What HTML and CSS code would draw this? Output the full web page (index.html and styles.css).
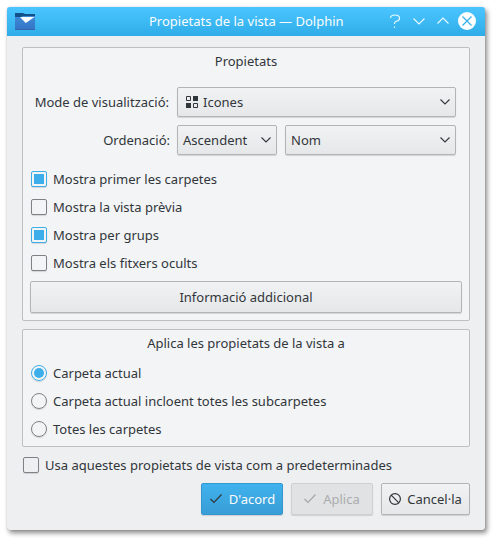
FILE: index.html
```html
<!DOCTYPE html>
<html lang="ca">
<head>
<meta charset="utf-8">
<title>Propietats de la vista — Dolphin</title>
<link rel="stylesheet" href="styles.css">
</head>
<body>
<main class="window">
  <header class="titlebar">
    <svg class="app-icon" width="20" height="18" viewBox="0 0 20 18"><defs><linearGradient id="folder" x1="0" y1="0" x2="0" y2="1"><stop offset="0" stop-color="#3d8bd8"/><stop offset="1" stop-color="#3573c5"/></linearGradient></defs><path d="M0 0h8l2 1h10v6H0z" fill="#12508a"/><path d="M0 4h6l2-1h12v14H0z" fill="url(#folder)"/><path d="M5 4h14.500l-8.800 6z" fill="#fff"/><path d="M0 16.500h20" stroke="#3068ae"/></svg>
    <h1 class="title">Propietats de la vista — Dolphin</h1>
    <div class="controls">
      <svg width="18" height="18" viewBox="0 0 18 18"><path d="M4.500 6q0-3 4.500-3t4.500 3.200q0 2.300-2.500 2.800t-2.500 3M8.500 14.500v1.500" class="thin"/></svg>
      <svg width="18" height="18" viewBox="0 0 18 18"><path d="M3.500 6.500l5.500 5.500 5.500-5.500" class="thin"/></svg>
      <svg width="18" height="18" viewBox="0 0 18 18"><path d="M3.500 11.500l5.500-5.500 5.500 5.500" class="thin"/></svg>
      <svg width="18" height="18" viewBox="0 0 18 18"><circle cx="9" cy="9" r="9" fill="#fff"/><path d="M4.500 4.500l9 9M13.500 4.500l-9 9" class="cross"/></svg>
    </div>
  </header>
  <div class="content">
    <section class="group properties">
      <h2 class="group-title">Propietats</h2>
      <div class="form">
        <span class="label">Mode de visualització:</span>
        <div class="button combo wide">
          <svg class="mode" width="12" height="12" viewBox="0 0 12 12"><path d="M.5.5h4v4h-4zM7.500 7.500h4v4h-4z" fill="none" stroke="#31363b"/><path d="M7 0h5v5H7zM0 7h5v5H0z" fill="#31363b"/></svg>
          <span>Icones</span>
          <svg class="chevron" width="10" height="6" viewBox="0 0 10 6"><path d="M.5.500l4.500 4.500 4.500-4.500"/></svg>
        </div>
        <span class="label order">Ordenació:</span>
        <div class="button combo"><span>Ascendent</span><svg class="chevron" width="10" height="6" viewBox="0 0 10 6"><path d="M.5.500l4.500 4.500 4.500-4.500"/></svg></div>
        <div class="button combo"><span>Nom</span><svg class="chevron" width="10" height="6" viewBox="0 0 10 6"><path d="M.5.500l4.500 4.500 4.500-4.500"/></svg></div>
      </div>
      <div class="options">
        <div class="option"><i class="box on"></i><span>Mostra primer les carpetes</span></div>
        <div class="option"><i class="box"></i><span>Mostra la vista prèvia</span></div>
        <div class="option"><i class="box on"></i><span>Mostra per grups</span></div>
        <div class="option"><i class="box"></i><span>Mostra els fitxers ocults</span></div>
      </div>
      <div class="button info">Informació addicional</div>
    </section>
    <section class="group scope">
      <h2 class="group-title">Aplica les propietats de la vista a</h2>
      <div class="options">
        <div class="option"><i class="box radio on"></i><span>Carpeta actual</span></div>
        <div class="option"><i class="box radio"></i><span>Carpeta actual incloent totes les subcarpetes</span></div>
        <div class="option"><i class="box radio"></i><span>Totes les carpetes</span></div>
      </div>
    </section>
    <div class="option default"><i class="box"></i><span>Usa aquestes propietats de vista com a predeterminades</span></div>
    <footer class="actions">
      <div class="button primary"><svg width="12" height="10" viewBox="0 0 12 10"><path d="M.5 5l3.500 3.500 7.500-8"/></svg><span>D'acord</span></div>
      <div class="button disabled"><svg width="12" height="10" viewBox="0 0 12 10"><path d="M.5 5l3.500 3.500 7.500-8"/></svg><span>Aplica</span></div>
      <div class="button cancel"><svg width="12" height="12" viewBox="0 0 12 12"><circle cx="6" cy="6" r="5.400"/><path d="M2.200 2.200l7.600 7.600"/></svg><span>Cancel·la</span></div>
    </footer>
  </div>
</main>
</body>
</html>
```
FILE: styles.css
```css
* { box-sizing: border-box; }
body {
  margin: 0;
  padding: 7px;
  height: 543px;
  overflow: hidden;
  background: #fff;
  color: #31363b;
  font: 13px/18px "Noto Sans", sans-serif;
  font-feature-settings: "locl" 0;
}
svg { display: block; flex: none; }
h1, h2 { margin: 0; font-size: inherit; font-weight: 400; }
.window {
  width: 478px;
  height: 523px;
  border-radius: 3px;
  background: #eeeff1;
  box-shadow: 0 0 1px #0005, 2px 3px 5px #0007;
}
.titlebar {
  display: flex;
  align-items: center;
  height: 29px;
  padding: 0 9px 0 8px;
  border-radius: 3px 3px 0 0;
  background: linear-gradient(#4bc5ff, #2fade8);
  color: #fcfcfc;
}
.title { flex: 1; padding: 0 0 2px 114px; white-space: nowrap; }
.controls { display: flex; gap: 6px; margin-top: -1px; }
.thin { fill: none; stroke: #effaff; stroke-width: 1.1; }
.cross { stroke: #38b2ed; stroke-width: 1.3; }
.content { padding: 11px 15px 0; }
.group { border: 1px solid #bdbfc1; border-radius: 2px; background: #f3f4f6; }
.group-title { text-align: center; }
.properties { height: 274px; padding: 4px 7px 0; }
.scope { height: 118px; margin-top: 8px; padding: 4px 7px 0; }
.form {
  display: grid;
  grid-template-columns: 139px 100px 171px;
  grid-auto-rows: 30px;
  gap: 8px;
  margin-top: 17px;
}
.label { align-self: center; text-align: right; white-space: nowrap; }
.order { margin-right: -1px; }
.button {
  display: flex;
  align-items: center;
  justify-content: center;
  border: 1px solid #b2b4b6;
  border-radius: 2px;
  background: linear-gradient(#f1f2f3, #e6e7e9);
  box-shadow: 0 1px 1px #0002;
  white-space: nowrap;
}
.combo { justify-content: flex-start; padding: 0 5px; }
.wide { grid-column: span 2; padding-left: 8px; }
.mode { margin-right: 5px; }
.chevron { margin-left: auto; }
.chevron path { fill: none; stroke: #31363b; stroke-width: 1.1; }
.options { padding-left: 1px; }
.properties .options { margin-top: 10px; }
.scope .options { margin-top: 7px; }
.option { display: flex; align-items: center; gap: 6px; height: 28px; }
.box {
  width: 16px;
  height: 16px;
  border: 1px solid #7f8284;
  border-radius: 2px;
  box-shadow: 0 1px 1px #0002;
}
.box.on { border-color: #3daee9; padding: 2px; background: #3daee9 content-box; }
.box.radio { border-radius: 50%; }
.radio.on::before { content: ""; display: block; width: 10px; height: 10px; border-radius: 50%; background: #3daee9; }
.box.radio.on { background: none; }
.info { height: 32px; margin-top: 4px; }
.default { margin: 4px 0 0 1px; }
.actions {
  display: grid;
  grid-template-columns: 82px 82px 89px;
  gap: 8px;
  height: 32px;
  margin-top: 4px;
  justify-content: end;
}
.actions .button { gap: 7px; }
.actions path, .actions circle { fill: none; stroke: #31363b; stroke-width: 1.2; }
.actions .primary { border-color: #3498d0; background: linear-gradient(#40b2ee, #389dd5); color: #fcfcfc; padding-left: 1px; }
.actions .cancel { gap: 6px; }
.actions .disabled { border-color: #cfd0d2; background: #e1e2e4; color: #aaacae; }
.actions .disabled path { stroke: #a5a7a9; }
```
